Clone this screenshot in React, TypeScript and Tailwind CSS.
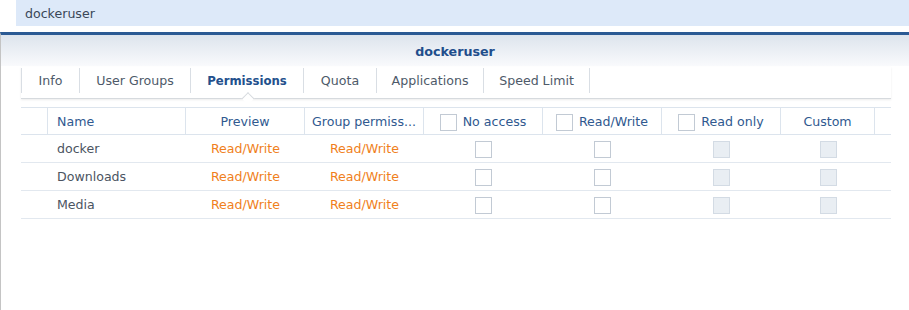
import React from 'react';

const tabs = [
  { label: 'Info', w: 'w-[59px] border-l' },
  { label: 'User Groups', w: 'w-[111px]' },
  { label: 'Permissions', w: 'w-[113px]' },
  { label: 'Quota', w: 'w-[73px]' },
  { label: 'Applications', w: 'w-[107px]' },
  { label: 'Speed Limit', w: 'w-[106px]' },
];
const rows = ['docker', 'Downloads', 'Media'];

function Box({ disabled = false }: { disabled?: boolean }) {
  return (
    <span
      className={`inline-block w-[17px] h-[17px] border ${
        disabled ? 'bg-[#e9eef3] border-[#d3dbe4]' : 'bg-white border-[#c2cad4]'
      }`}
    />
  );
}

const grid = 'grid grid-cols-[27px_138px_119px_119px_119px_119px_119px_94px_1fr]';

export default function App() {
  return (
    <div className="w-[909px] h-[310px] bg-white overflow-hidden font-['DejaVu_Sans',sans-serif] text-[12.6px]">
      {/* Top bar */}
      <div className="ml-4 h-[26px] bg-[#dde9f9] pl-[9px] pt-[2px] flex items-center text-[#3a4758]">dockeruser</div>

      {/* Window */}
      <div className="mt-[6px] h-[278px] border-l border-l-[#c4c4c4] border-t-[3px] border-t-[#2b5a94]">
        <div className="h-[31px] pt-[2px] bg-gradient-to-b from-[#dde4ed] to-[#f9fafc] flex items-center justify-center font-bold text-[12.7px] text-[#1f4e8c]">
          dockeruser
        </div>

        <div className="pl-[20px] pr-[18px]">
          {/* Tabs */}
          <div className="relative mt-[1px] h-[32px] flex border-b border-[#d6dade] shadow-[0_1px_2px_rgba(0,0,0,0.08)]">
            {tabs.map((t) => {
              const active = t.label === 'Permissions';
              return (
                <div key={t.label} className="relative h-full">
                  <div
                    className={`${t.w} h-[25px] mt-[1px] pt-[2px] flex items-center justify-center border-r border-[#d9dee4] ${
                      active ? 'font-bold text-[11.7px] text-[#23508c]' : 'text-[#4e5a69]'
                    }`}
                  >
                    {t.label}
                  </div>
                  {active && (
                    <span className="absolute left-1/2 -translate-x-1/2 bottom-[-5px] w-[9px] h-[9px] rotate-45 bg-white border-l border-t border-[#d6dade]" />
                  )}
                </div>
              );
            })}
          </div>

          {/* Table */}
          <div className="mt-[8px]">
            <div className={`${grid} h-[28px] border-t border-b border-[#dce4ed] text-[#30598f]`}>
              <div className="border-r border-[#dce4ed]" />
              <div className="border-r border-[#dce4ed] flex items-center pl-[9px] pt-[2px]">Name</div>
              <div className="border-r border-[#dce4ed] flex items-center justify-center pt-[2px]">Preview</div>
              <div className="border-r border-[#dce4ed] flex items-center justify-center pt-[2px]">Group permiss...</div>
              <div className="border-r border-[#dce4ed] flex items-center justify-center gap-[6px] pt-[2px]">
                <Box />
                No access
              </div>
              <div className="border-r border-[#dce4ed] flex items-center justify-center gap-[6px] pt-[2px]">
                <Box />
                Read/Write
              </div>
              <div className="border-r border-[#dce4ed] flex items-center justify-center gap-[6px] pt-[2px]">
                <Box />
                Read only
              </div>
              <div className="border-r border-[#dce4ed] flex items-center justify-center pt-[2px]">Custom</div>
              <div />
            </div>
            {rows.map((r) => (
              <div key={r} className={`${grid} h-[28px] pt-[2px] border-b border-[#e2e8ef]`}>
                <div />
                <div className="flex items-center pl-[9px] text-[#4b5461]">{r}</div>
                <div className="flex items-center justify-center text-[#f07f1c]">Read/Write</div>
                <div className="flex items-center justify-center text-[#f07f1c]">Read/Write</div>
                <div className="flex items-center justify-center">
                  <Box />
                </div>
                <div className="flex items-center justify-center">
                  <Box />
                </div>
                <div className="flex items-center justify-center">
                  <Box disabled />
                </div>
                <div className="flex items-center justify-center">
                  <Box disabled />
                </div>
                <div />
              </div>
            ))}
          </div>
        </div>
      </div>
    </div>
  );
}
